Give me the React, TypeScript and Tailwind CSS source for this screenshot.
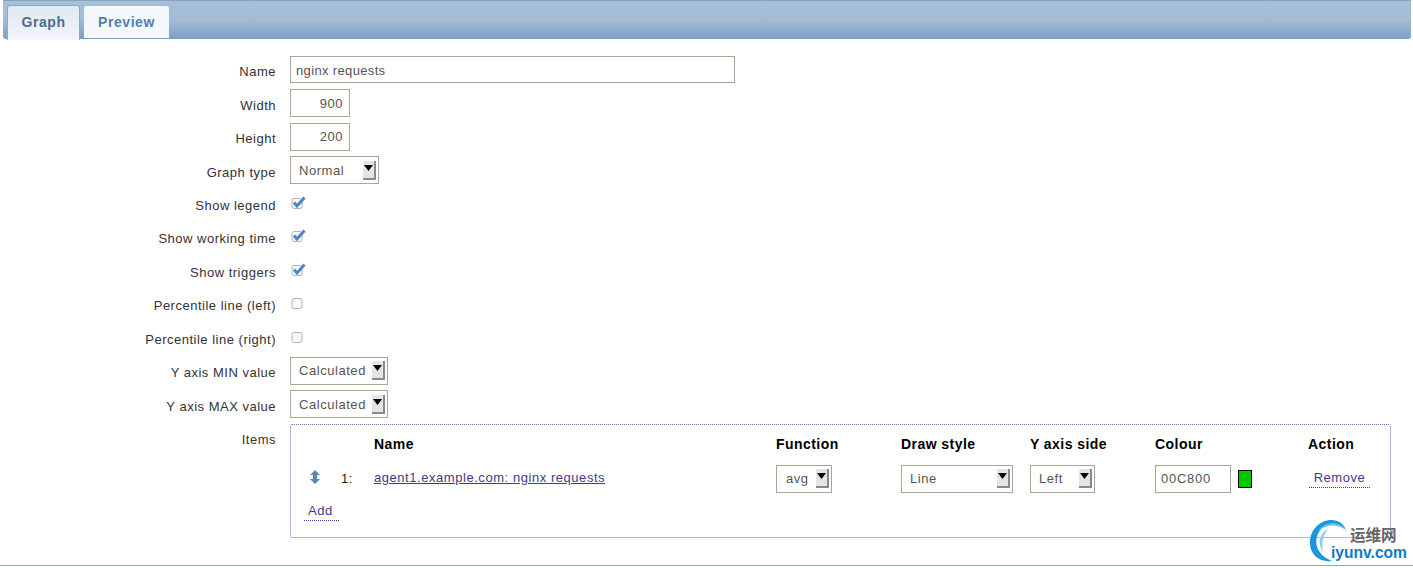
const font = "font-['Liberation_Sans',sans-serif] tracking-[0.55px]";

function Arrow() {
  return (
    <span className="flex h-[19px] w-[13px] flex-col items-center border-r-2 border-b-2 border-r-[#8a8a8a] border-b-[#8a8a8a] bg-[#e4e4e4] pt-[4px]">
      <svg width="9" height="6" viewBox="0 0 9 6">
        <path d="M0 0h9L4.5 6z" fill="#000" />
      </svg>
    </span>
  );
}

function Select({label, width, pad = "pl-[8px]"}: {label: string; width: string; pad?: string}) {
  return (
    <div className={`flex h-[28px] items-center justify-between border border-[#aaa593] bg-white pr-[2px] text-[13px] text-[#555] ${width} ${pad}`}>
      <span>{label}</span>
      <Arrow />
    </div>
  );
}

function Check({on}: {on?: boolean}) {
  return (
    <svg width="16" height="14" viewBox="0 0 16 14" className="mt-[6px] ml-[1px]">
      <rect x="1" y="2.5" width="10" height="10" rx="2" fill="#f8f8f6" stroke="#b5b5aa" />
      {on && <path d="M3 6.5l3 3.5 7.5-8.5" fill="none" stroke="#4d86cc" strokeWidth="3" />}
    </svg>
  );
}

function Row({label, children}: {label: string; children: React.ReactNode}) {
  return (
    <div className="flex h-[33.45px]">
      <div className="w-[276px] pt-[7.3px] text-right text-[13px] leading-[18px] tracking-[0.5px] text-[#333]">{label}</div>
      <div className="ml-[14px]">{children}</div>
    </div>
  );
}

function Field({value, width, right}: {value: string; width: string; right?: boolean}) {
  return (
    <input
      readOnly
      value={value}
      className={`border border-[#aaa593] bg-white pr-[6px] pl-[5px] text-[13px] text-[#555] outline-none ${width} ${right ? "text-right" : ""}`}
    />
  );
}

function Logo() {
  return (
    <div className="absolute top-[518px] left-[1308px] h-[46px] w-[104px]">
      <svg width="44" height="44" viewBox="0 0 44 44" className="absolute top-0 left-0">
        <path d="M24 43C10 45 1 35 2 23 3 9 16-1 29 3c4 1 7 4 9 9-7-6-15-7-22-3C8 14 6 25 11 33c3 5 8 8 13 10z" fill="#1b97dc" />
        <path d="M38 12C31 3 18 3 10 13c7-6 18-8 28-1z" fill="#6cc4ee" />
        <path d="M15 34C9 26 11 15 20 11c-4 5-7 13-5 23z" fill="#8fd0f0" />
      </svg>
      <span className="absolute top-[7px] left-[42px] font-['Noto_Sans_CJK_SC',sans-serif] text-[15.5px] leading-[18px] font-bold tracking-normal text-[#666]">运维网</span>
      <span className="absolute top-[25px] left-[23px] font-['Liberation_Sans',sans-serif] text-[15.6px] leading-[20px] font-bold tracking-normal text-[#0f7cc4]">iyunv.com</span>
    </div>
  );
}

const cols = "grid-cols-[83px_402px_125px_129px_125px_153px_auto]";

export default function App() {
  return (
    <div className={`relative h-[568px] w-[1413px] overflow-hidden bg-white ${font}`}>
      <div className="mr-[2px] ml-[3px] flex h-[39px] items-end gap-[4px] rounded-b-[3px] border-t border-[#86a3c2] bg-gradient-to-b from-[#a9bfd8] via-[#a3bbd5] to-[#7a9fc3] pl-[4px]">
        <div className="-mb-[1px] flex h-[35px] w-[73px] items-center justify-center rounded-t-[3px] border border-b-0 border-[#8fa9c6] bg-gradient-to-b from-[#dfe8f1] to-[#f2f5f9] pb-[2px] text-[14px] font-bold text-[#4c6c90]">Graph</div>
        <div className="mb-[1px] flex h-[32px] w-[85px] items-center justify-center rounded-t-[3px] bg-[#f4f8fb] text-[14px] font-bold text-[#5280ad]">Preview</div>
      </div>

      <div className="pt-[17px]">
        <Row label="Name"><Field value="nginx requests" width="h-[27px] w-[445px] pt-[1px] tracking-[0.35px]" /></Row>
        <Row label="Width"><Field value="900" width="h-[28px] w-[60px]" right /></Row>
        <Row label="Height"><Field value="200" width="h-[28px] w-[60px]" right /></Row>
        <Row label="Graph type"><Select label="Normal" width="w-[89px]" /></Row>
        <Row label="Show legend"><Check on /></Row>
        <Row label="Show working time"><Check on /></Row>
        <Row label="Show triggers"><Check on /></Row>
        <Row label="Percentile line (left)"><Check /></Row>
        <Row label="Percentile line (right)"><Check /></Row>
        <Row label="Y axis MIN value"><Select label="Calculated" width="w-[98px]" /></Row>
        <Row label="Y axis MAX value"><Select label="Calculated" width="w-[98px]" /></Row>
        <div className="flex">
          <div className="w-[276px] pt-[7.3px] text-right text-[13px] leading-[18px] tracking-[0.5px] text-[#333]">Items</div>
          <div className="ml-[14px] h-[114px] w-[1101px] rounded-[2px] border border-dotted border-[#5c7aa8] text-[13px]">
            <div className={`grid ${cols} pt-[10px] text-[14px] leading-[18px] font-bold tracking-[0.45px] text-black`}>
              <span />
              <span>Name</span>
              <span>Function</span>
              <span>Draw style</span>
              <span>Y axis side</span>
              <span>Colour</span>
              <span>Action</span>
            </div>
            <div className={`mt-[12px] grid h-[28px] ${cols} items-center`}>
              <div className="flex items-center pl-[19px]">
                <svg width="10" height="14" viewBox="0 0 10 14" className="-mt-[3px]">
                  <path d="M5 0l5 5H7v4h3l-5 5-5-5h3V5H0z" fill="#5b87b3" />
                </svg>
                <span className="ml-[21px] text-[#222]">1:</span>
              </div>
              <a className="-mt-[3px] text-[#3f3a8c] underline">agent1.example.com: nginx requests</a>
              <Select label="avg" width="w-[56px]" pad="pl-[9px]" />
              <Select label="Line" width="w-[112px]" />
              <Select label="Left" width="w-[65px]" />
              <div className="flex items-center">
                <Field value="00C800" width="h-[28px] w-[76px] tracking-[0.75px]" />
                <span className="ml-[7px] h-[18px] w-[14px] border border-black bg-[#00c800]" />
              </div>
              <a className="ml-[1px] w-[61px] border-b border-dotted border-[#3f3a8c] pb-[1px] text-center leading-[16px] text-[#3f3a8c]">Remove</a>
            </div>
            <a className="mt-[9px] ml-[13px] block w-[35px] border-b border-dotted border-[#3f3a8c] pr-[2px] text-center leading-[18px] text-[#3f3a8c]">Add</a>
          </div>
        </div>
      </div>

      <div className="absolute right-0 bottom-[2px] left-0 h-px bg-[#8fa6c2]" />
      <Logo />
    </div>
  );
}
